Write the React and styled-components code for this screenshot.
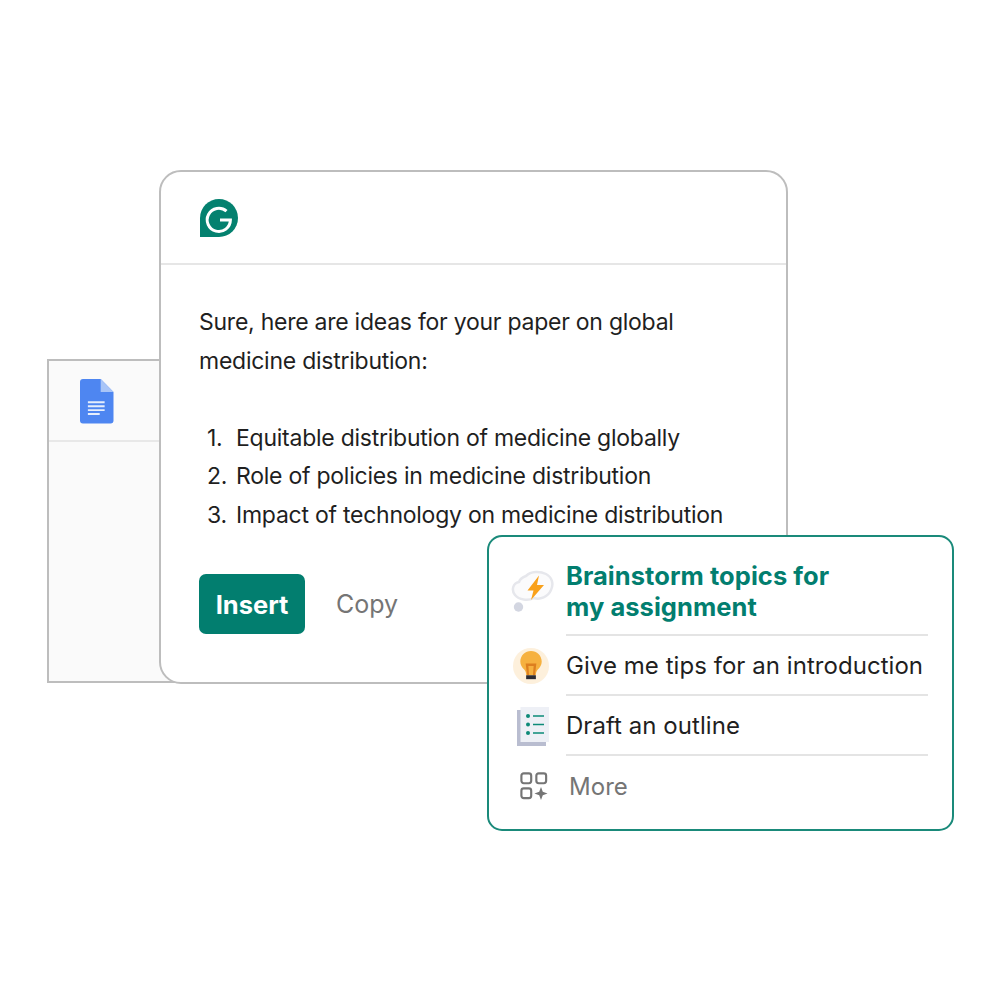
import styled, { createGlobalStyle } from "styled-components";

const GlobalStyle = createGlobalStyle`
  html, body {
    margin: 0;
    padding: 0;
    background: #fff;
    font-family: Inter, "Liberation Sans", sans-serif;
  }
`;

const Canvas = styled.div`
  position: relative;
  width: 1000px;
  height: 1000px;
  overflow: hidden;
  background: #fff;
`;

const DocWindow = styled.div`
  position: absolute;
  left: 46.5px;
  top: 359px;
  width: 160px;
  height: 324px;
  box-sizing: border-box;
  border: 2px solid #bdbdbd;
  background: #fafafa;
`;

const DocHeader = styled.div`
  height: 81px;
  box-sizing: border-box;
  border-bottom: 2px solid #e8e8e8;
  padding: 18px 0 0 31.5px;
`;

const MainCard = styled.div`
  position: absolute;
  left: 159px;
  top: 170px;
  width: 629px;
  height: 514px;
  box-sizing: border-box;
  border: 2px solid #bdbdbd;
  border-radius: 22px;
  background: #fff;
`;

const CardHeader = styled.div`
  height: 93px;
  box-sizing: border-box;
  border-bottom: 2px solid #e6e6e6;
  padding: 26px 0 0 38px;
  display: flex;
`;

const CardBody = styled.div`
  padding: 38px 38px 0;
  color: #1f1f1f;
  font-size: 23px;
  line-height: 38.5px;
  letter-spacing: -0.25px;
`;

const Paragraph = styled.p`
  margin: 0 0 38.5px;
`;

const IdeaList = styled.ol`
  margin: 0;
  padding: 0;
  list-style: none;
  counter-reset: idea;
`;

const IdeaItem = styled.li`
  display: flex;
  counter-increment: idea;

  &::before {
    content: counter(idea) ".";
    width: 29px;
    margin-left: 8px;
  }
`;

const Actions = styled.div`
  display: flex;
  align-items: center;
  gap: 31px;
  margin-top: 40px;
`;

const InsertButton = styled.button`
  width: 106px;
  height: 60px;
  border: none;
  border-radius: 7px;
  background: #027e6f;
  color: #fff;
  font: 700 25.5px Inter, sans-serif;
  padding: 0;
`;

const CopyButton = styled.button`
  border: none;
  background: none;
  padding: 0;
  color: #757575;
  font: 400 25px Inter, sans-serif;
`;

const PromptCard = styled.div`
  position: absolute;
  left: 487px;
  top: 535px;
  width: 467px;
  height: 296px;
  box-sizing: border-box;
  border: 2.5px solid #1a8a7a;
  border-radius: 15px;
  background: #fff;
  padding: 8px 24px 0 21px;
`;

const PromptRow = styled.div`
  display: flex;
  align-items: center;
  height: ${(p) => p.$height}px;
`;

const IconSlot = styled.div`
  width: 56px;
  box-sizing: border-box;
  flex: none;
  display: flex;
  align-items: center;
  padding-left: ${(p) => p.$indent}px;
`;

const PromptText = styled.div`
  flex: 1;
  min-width: 0;
  align-self: stretch;
  box-sizing: border-box;
  display: flex;
  align-items: center;
  border-bottom: ${(p) => (p.$last ? "none" : "2px solid #e4e4e4")};
  color: ${(p) => p.$color || "#1f1f1f"};
  font-size: ${(p) => p.$size || 24}px;
  font-weight: ${(p) => p.$weight || 400};
  line-height: 31px;
  letter-spacing: 0.05px;
  padding-top: ${(p) => p.$top || 0}px;
  padding-left: ${(p) => p.$indent || 0}px;
  white-space: nowrap;
`;

const DocsIcon = () => (
  <svg width="33.500" height="44.500" viewBox="0 0 34 45">
    <path d="M3 0H21L34 13V42a3 3 0 0 1-3 3H3a3 3 0 0 1-3-3V3a3 3 0 0 1 3-3Z" fill="#4e86f1" />
    <path d="M21 0L34 13H21Z" fill="#a9c5f7" />
    <path d="M8 23.500H25M8 27.500H25M8 31.500H25M8 35.500H20" stroke="#e6eefc" strokeWidth="2" />
  </svg>
);

const GrammarlyLogo = () => (
  <svg width="40" height="40" viewBox="0 0 40 40">
    <path d="M20 1a19 19 0 0 1 0 38H1V20A19 19 0 0 1 20 1Z" fill="#04816f" />
    <path d="M27.500 13.200A11.600 11.600 0 1 0 31.400 22H21" fill="none" stroke="#fff" strokeWidth="3" />
  </svg>
);

const BrainstormIcon = () => (
  <svg width="44" height="46" viewBox="0 0 44 46">
    <path
      d="M15 8C20 3 29 3 35 6 41 9 43 16 40 22 37 29 29 32 23 30 17 33 8 32 4 27 0 22 2 15 8 14 9 11 12 9 15 8Z"
      fill="#fbfbfc"
      stroke="#e6e7ec"
      strokeWidth="2.500"
    />
    <circle cx="7.500" cy="39" r="4.700" fill="#d3d6e1" />
    <path d="M28 7.500L16.500 22.500H22.500L20 32L33 17H26Z" fill="#f9a11b" />
  </svg>
);

const BulbIcon = () => (
  <svg width="37" height="37" viewBox="0 0 38 38">
    <circle cx="18.500" cy="18.500" r="18.500" fill="#fdf0dc" />
    <path
      d="M18.500 3C12.500 3 7.500 7.800 7.500 13.800 7.500 17.500 9.300 20 11.500 22 13 23.500 13.500 25.500 13.500 28H23.500C23.500 25.500 24 23.500 25.500 22 27.700 20 29.500 17.500 29.500 13.800 29.500 7.800 24.500 3 18.500 3Z"
      fill="#f6b13f"
    />
    <path d="M13 16H24L22.500 28H20.500L21.200 18.500H15.800L16.500 28H14.500Z" fill="#dd7f1f" />
    <rect x="13.500" y="28" width="10" height="4" fill="#2b2b33" />
  </svg>
);

const OutlineIcon = () => (
  <svg width="32" height="39" viewBox="0 0 32 39">
    <rect x="0" y="3" width="29" height="36" fill="#b9bdd0" />
    <rect x="3.500" y="0" width="28.500" height="35" fill="#eef0f6" />
    <g fill="#0d8a78">
      <circle cx="11" cy="9" r="2" />
      <circle cx="11" cy="17.500" r="2" />
      <circle cx="11" cy="26" r="2" />
    </g>
    <path d="M16 9H27M16 17.500H27M16 26H27" stroke="#0d8a78" strokeWidth="1.600" />
  </svg>
);

const MoreIcon = () => (
  <svg width="28" height="28" viewBox="0 0 30 30">
    <g fill="none" stroke="#757575" strokeWidth="2.300">
      <rect x="1.500" y="1.500" width="10.500" height="10.500" rx="2.500" />
      <rect x="17.500" y="1.500" width="10.500" height="10.500" rx="2.500" />
      <rect x="1.500" y="17.500" width="10.500" height="10.500" rx="2.500" />
    </g>
    <path d="M22.500 16L24.400 21.100L29.500 23L24.400 24.900L22.500 30L20.600 24.900L15.500 23L20.600 21.100Z" fill="#757575" />
  </svg>
);

export default function App() {
  return (
    <Canvas>
      <GlobalStyle />
      <DocWindow>
        <DocHeader>
          <DocsIcon />
        </DocHeader>
      </DocWindow>

      <MainCard>
        <CardHeader>
          <GrammarlyLogo />
        </CardHeader>
        <CardBody>
          <Paragraph>
            Sure, here are ideas for your paper on global
            <br />
            medicine distribution:
          </Paragraph>
          <IdeaList>
            <IdeaItem>Equitable distribution of medicine globally</IdeaItem>
            <IdeaItem>Role of policies in medicine distribution</IdeaItem>
            <IdeaItem>Impact of technology on medicine distribution</IdeaItem>
          </IdeaList>
          <Actions>
            <InsertButton>Insert</InsertButton>
            <CopyButton>Copy</CopyButton>
          </Actions>
        </CardBody>
      </MainCard>

      <PromptCard>
        <PromptRow $height={91}>
          <IconSlot $indent={1}>
            <BrainstormIcon />
          </IconSlot>
          <PromptText $color="#027e6f" $weight={700} $size={25.5} $top={2}>
            <span>
              Brainstorm topics for
              <br />
              my assignment
            </span>
          </PromptText>
        </PromptRow>
        <PromptRow $height={60}>
          <IconSlot $indent={2.5}>
            <BulbIcon />
          </IconSlot>
          <PromptText $top={1}>Give me tips for an introduction</PromptText>
        </PromptRow>
        <PromptRow $height={60}>
          <IconSlot $indent={6.5}>
            <OutlineIcon />
          </IconSlot>
          <PromptText $top={1}>Draft an outline</PromptText>
        </PromptRow>
        <PromptRow $height={60}>
          <IconSlot $indent={9.5}>
            <MoreIcon />
          </IconSlot>
          <PromptText $last $color="#757575" $indent={3}>
            More
          </PromptText>
        </PromptRow>
      </PromptCard>
    </Canvas>
  );
}
